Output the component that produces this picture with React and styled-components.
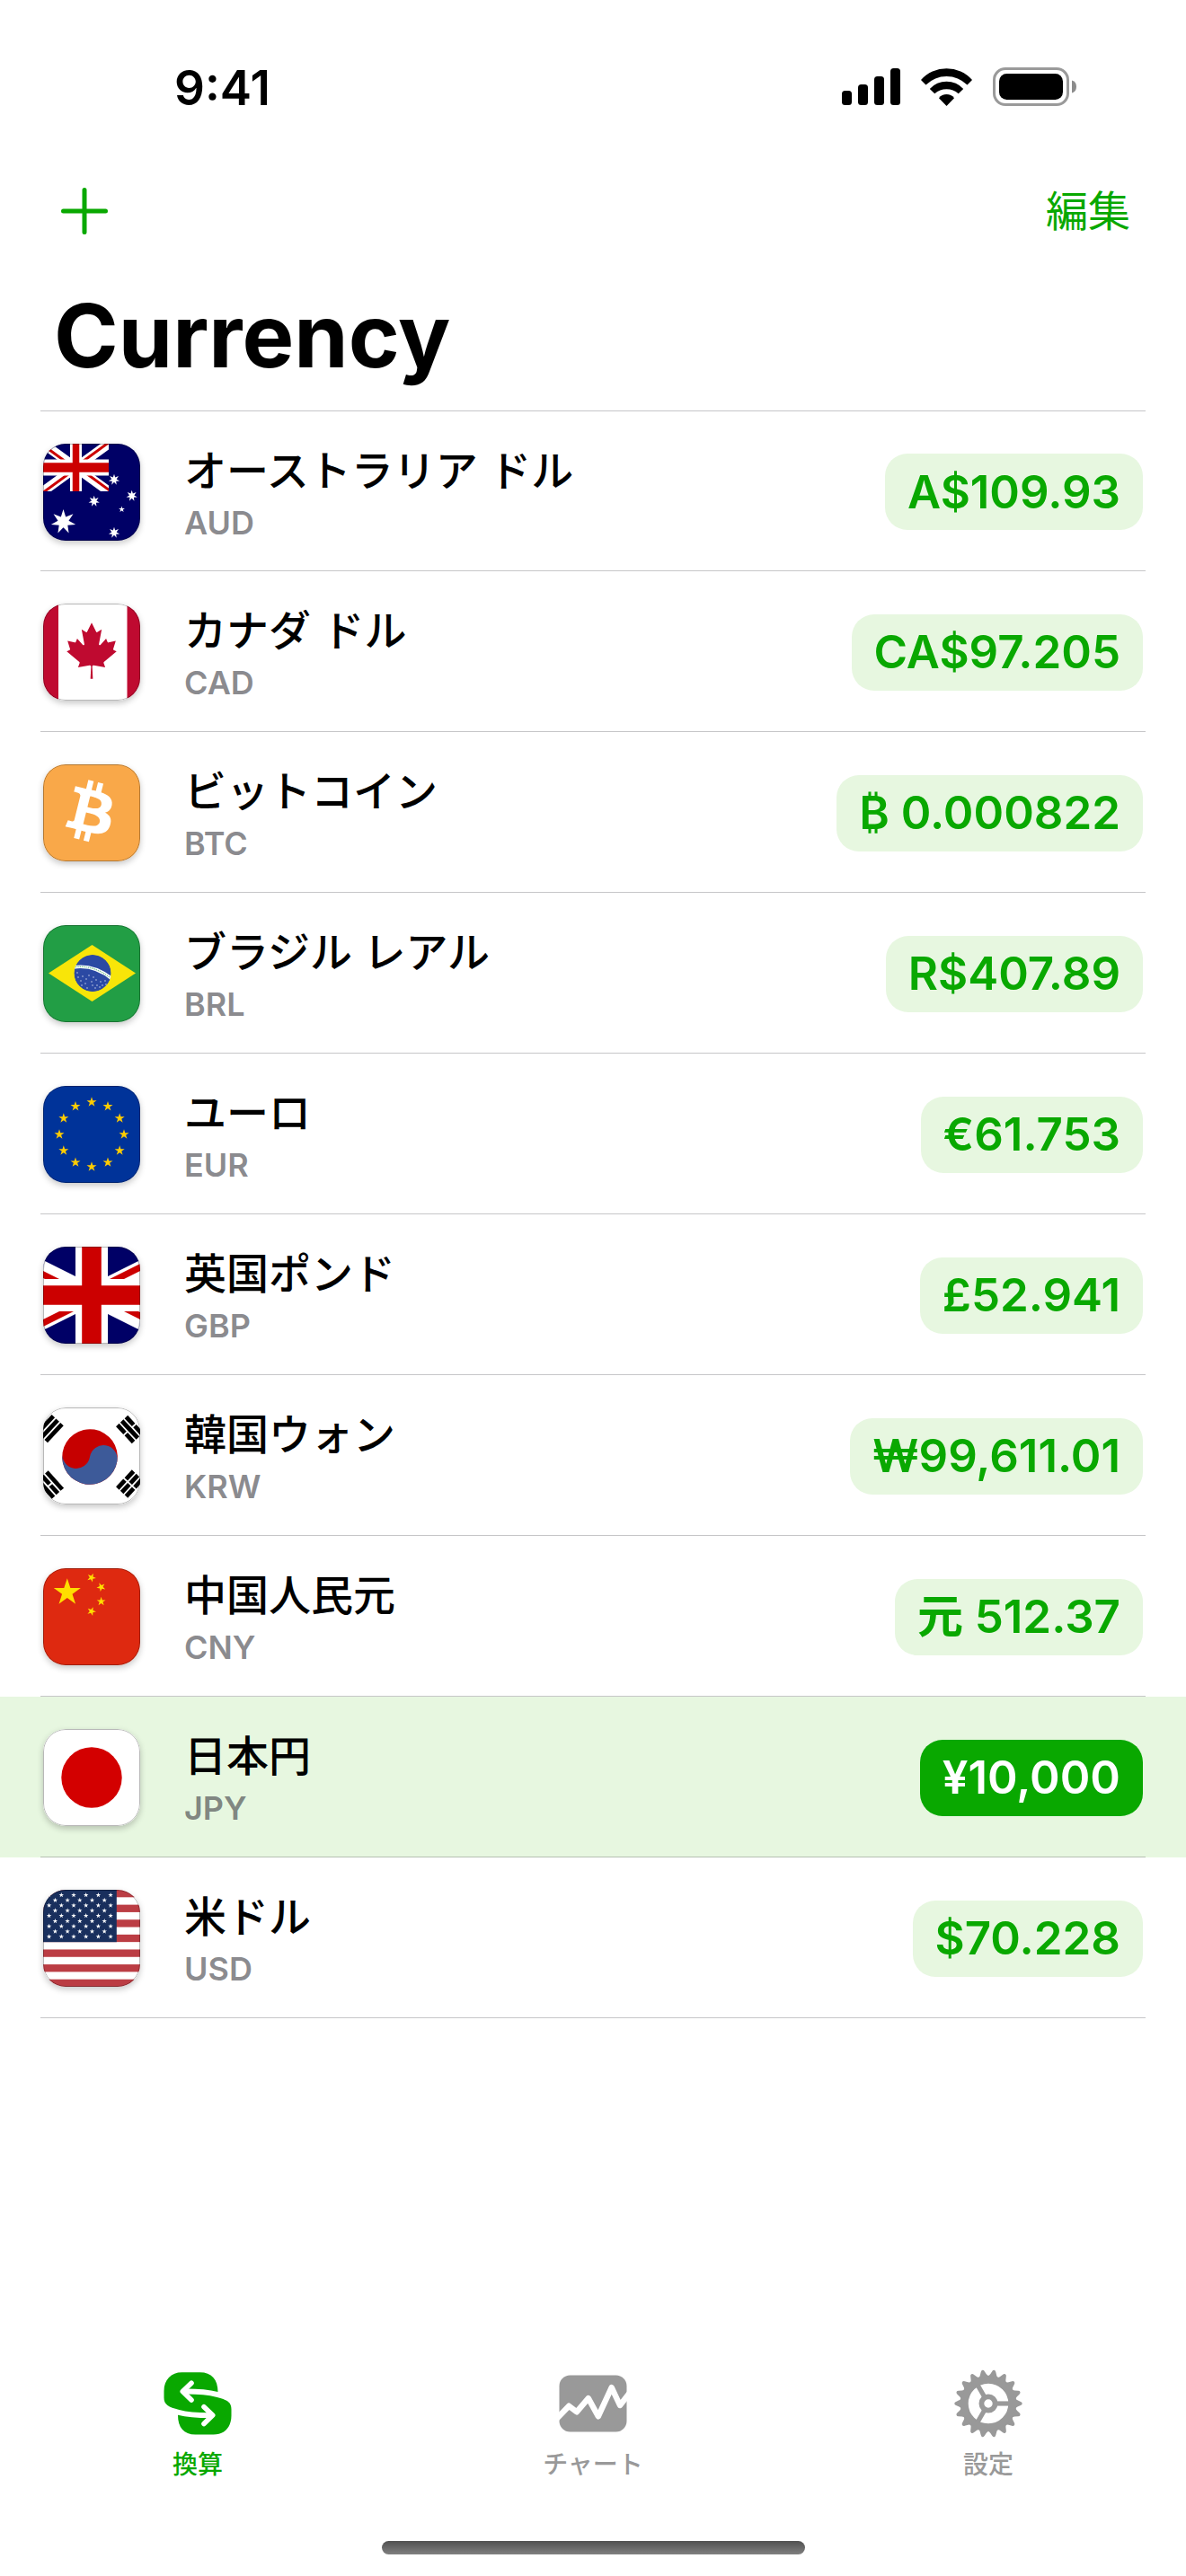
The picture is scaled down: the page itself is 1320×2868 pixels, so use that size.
import React, { useState } from "react";
import styled, { createGlobalStyle, css } from "styled-components";

const GREEN = "#09a800";
const MINT = "#e7f7e0";
const GRAY = "#999999";
const LINE = "rgba(60, 60, 67, 0.29)";

const GlobalStyle = createGlobalStyle`
  *, *::before, *::after { box-sizing: border-box; }
  body {
    margin: 0;
    background: #ffffff;
    color: #000000;
    font-family: Inter, "Noto Sans CJK JP", sans-serif;
  }
  button { font: inherit; color: inherit; background: none; border: 0; padding: 0; margin: 0; cursor: pointer; }
`;

const Page = styled.div`
  min-height: 100vh;
  display: flex;
  flex-direction: column;
`;

const StatusBar = styled.div`
  display: flex;
  align-items: center;
  justify-content: space-between;
  height: 160px;
  padding: 36px 122px 0 194px;
`;

const Clock = styled.time`
  font-size: 53px;
  line-height: 60px;
  font-weight: 600;
`;

const StatusIcons = styled.div`
  display: flex;
  align-items: center;
  gap: 23px;
  padding-bottom: 3px;
  svg { display: block; }
`;

const Toolbar = styled.div`
  display: flex;
  align-items: center;
  justify-content: space-between;
  height: 150px;
  padding: 0 62px 0 68px;
  color: ${GREEN};
`;

const IconButton = styled.button`
  display: flex;
  svg { display: block; }
`;

const TextButton = styled.button`
  && {
    font-size: 47px;
    line-height: 60px;
  }
`;

const Title = styled.h1`
  margin: 0;
  padding: 2px 60px 21px;
  font-size: 97px;
  line-height: 124px;
  font-weight: 700;
`;

const List = styled.ul`
  list-style: none;
  margin: 0;
  padding: 0;
`;

const Row = styled.li`
  height: 179px;
  padding: 0 45px;
  background: ${(p) => (p.$active ? MINT : "transparent")};
`;

const RowBody = styled.div`
  display: flex;
  align-items: center;
  height: 100%;
  padding: 2px 3px 0;
  border-bottom: 1px solid ${LINE};
  ${Row}:first-child & {
    border-top: 1px solid ${LINE};
  }
`;

const FlagTile = styled.div`
  flex: none;
  width: 108px;
  height: 108px;
  border-radius: 25px;
  overflow: hidden;
  box-shadow: 0 3px 7px rgba(0, 0, 0, 0.22);
  svg { display: block; width: 100%; height: 100%; }
`;

const Names = styled.div`
  flex: 1;
  display: flex;
  flex-direction: column;
  padding-left: 49px;
`;

const Name = styled.span`
  font-size: 47px;
  line-height: 68px;
  font-weight: 500;
`;

const Code = styled.span`
  font-size: 36px;
  line-height: 48px;
  font-weight: 600;
  color: rgba(60, 60, 67, 0.6);
`;

const Amount = styled.button`
  && {
    height: 85px;
    padding: 0 25px;
    border-radius: 25px;
    font-size: 51px;
    line-height: 60px;
    font-weight: 600;
    white-space: nowrap;
    color: ${GREEN};
    background: ${MINT};
    ${(p) =>
      p.$active &&
      css`
        color: #ffffff;
        background: ${GREEN};
      `}
  }
`;

const TabBar = styled.nav`
  display: grid;
  grid-template-columns: repeat(3, 1fr);
  margin-top: auto;
  padding-bottom: 63px;
`;

const Tab = styled.button`
  && {
    display: flex;
    flex-direction: column;
    align-items: center;
    gap: 8px;
    color: ${(p) => (p.$active ? GREEN : GRAY)};
    font-size: 28px;
    line-height: 44px;
    font-weight: 500;
  }
  svg { display: block; }
`;

const HomeIndicator = styled.div`
  align-self: center;
  width: 471px;
  height: 15px;
  margin-bottom: 24px;
  border-radius: 8px;
  background: linear-gradient(#505050, #808080);
`;

/* ---------- geometry helpers ---------- */

function starPoints(cx, cy, outer, inner, n, turn = 0) {
  const pts = [];
  for (let i = 0; i < n * 2; i++) {
    const r = i % 2 ? inner : outer;
    const a = -Math.PI / 2 + (i * Math.PI) / n + (turn * Math.PI) / 180;
    pts.push(`${(cx + r * Math.cos(a)).toFixed(2)},${(cy + r * Math.sin(a)).toFixed(2)}`);
  }
  return pts.join(" ");
}

const Star = ({ x, y, r, inner = 0.382, n = 5, turn = 0, fill }) => (
  <polygon points={starPoints(x, y, r, r * inner, n, turn)} fill={fill} />
);

/* ---------- flags ---------- */

const Australia = () => (
  <>
    <rect width="108" height="108" fill="#000066" />
    <clipPath id="auCanton"><rect width="73" height="53" /></clipPath>
    <g clipPath="url(#auCanton)">
      <path d="M0 0L73 53M73 0L0 53" stroke="#fff" strokeWidth="10.5" />
      <path d="M-1 1L36 28M37 25L74 -2M-1 55L36 28M37 25L74 52" stroke="#cc0000" strokeWidth="3" />
      <path d="M36.500 0V53" stroke="#fff" strokeWidth="13" />
      <path d="M0 26.500H73" stroke="#fff" strokeWidth="18" />
      <path d="M36.500 0V53" stroke="#cc0000" strokeWidth="7.500" />
      <path d="M0 26.500H73" stroke="#cc0000" strokeWidth="10.500" />
    </g>
    <Star x={22.5} y={87} r={14} inner={0.44} n={7} fill="#fff" />
    {[[79, 40], [98.7, 58], [56.7, 64], [79, 99]].map(([x, y]) => (
      <Star key={`${x}-${y}`} x={x} y={y} r={6.3} inner={0.44} n={7} fill="#fff" />
    ))}
    <Star x={87.5} y={73} r={3.6} fill="#fff" />
  </>
);

const Canada = () => (
  <>
    <rect width="108" height="108" fill="#fff" />
    <path d="M0 0H17V108H0ZM93.500 0H108V108H93.500Z" fill="#bf0a30" />
    <path
      transform="translate(54 52.200) scale(.0149 .0155)"
      fill="#bf0a30"
      d="m-90 2030 45-863a95 95 0 0 0-111-98l-859 151 116-320a65 65 0 0 0-20-73l-941-762 212-99a65 65 0 0 0 34-79l-186-572 542 115a65 65 0 0 0 73-38l105-247 423 454a65 65 0 0 0 111-57l-204-1052 327 189a65 65 0 0 0 91-27l332-652 332 652a65 65 0 0 0 91 27l327-189-204 1052a65 65 0 0 0 111 57l423-454 105 247a65 65 0 0 0 73 38l542-115-186 572a65 65 0 0 0 34 79l212 99-941 762a65 65 0 0 0-20 73l116 320-859-151a95 95 0 0 0-111 98l45 863z"
    />
  </>
);

const Bitcoin = () => (
  <>
    <rect width="108" height="108" fill="#f9a849" />
    <path
      transform="translate(-1.800 -1.600) scale(1.700)"
      fill="#fff"
      d="m46.103 27.444c0.637-4.258-2.605-6.547-7.038-8.074l1.438-5.768-3.511-0.875-1.4 5.616c-0.923-0.23-1.871-0.447-2.813-0.662l1.41-5.653-3.509-0.875-1.439 5.766c-0.764-0.174-1.514-0.346-2.242-0.527l0.004-0.018-4.842-1.209-0.934 3.75s2.605 0.597 2.55 0.634c1.422 0.355 1.679 1.296 1.636 2.042l-1.638 6.571c0.098 0.025 0.225 0.061 0.365 0.117-0.117-0.029-0.242-0.061-0.371-0.092l-2.296 9.205c-0.174 0.432-0.615 1.08-1.609 0.834 0.035 0.051-2.552-0.637-2.552-0.637l-1.743 4.019 4.569 1.139c0.85 0.213 1.683 0.436 2.503 0.646l-1.453 5.834 3.507 0.875 1.439-5.772c0.958 0.26 1.888 0.5 2.798 0.726l-1.434 5.745 3.511 0.875 1.453-5.823c5.987 1.133 10.489 0.676 12.384-4.739 1.527-4.36-0.076-6.875-3.226-8.515 2.294-0.529 4.022-2.038 4.483-5.155zm-8.022 11.249c-1.085 4.36-8.426 2.003-10.806 1.412l1.928-7.729c2.38 0.594 10.012 1.77 8.878 6.317zm1.086-11.312c-0.99 3.966-7.1 1.951-9.082 1.457l1.748-7.01c1.982 0.494 8.365 1.416 7.334 5.553z"
    />
  </>
);

const BRAZIL_STARS = [
  [39, 58], [42, 62], [44, 57], [48, 60], [47, 65], [43, 67], [51, 56], [54, 63], [56, 58],
  [59, 61], [55, 67], [60, 67], [64, 63], [66, 67], [69, 62], [70, 66], [49, 70], [58, 70], [63, 69], [38, 53], [49, 47],
];

const Brazil = () => (
  <>
    <rect width="108" height="108" fill="#229e45" />
    <path d="M6 53.500L54.500 22L103 53.500L54.500 85Z" fill="#f8e509" />
    <clipPath id="brGlobe"><circle cx="55" cy="53.500" r="20.600" /></clipPath>
    <g clipPath="url(#brGlobe)">
      <circle cx="55" cy="53.500" r="20.600" fill="#2b49a3" />
      <path d="M33 47C48 44.500 64 49 78 61" fill="none" stroke="#fff" strokeWidth="3.600" />
      <path d="M36 46.600C49 45 62 49 74 58" fill="none" stroke="#7fc49a" strokeWidth="1.300" strokeDasharray="1.500 .8" />
      {BRAZIL_STARS.map(([x, y]) => (
        <circle key={`${x}-${y}`} cx={x} cy={y} r="0.65" fill="#e8edfa" />
      ))}
    </g>
  </>
);

const Europe = () => (
  <>
    <rect width="108" height="108" fill="#003399" />
    {Array.from({ length: 12 }, (_, i) => {
      const a = (i * Math.PI) / 6;
      return <Star key={i} x={54 + 36 * Math.sin(a)} y={54 - 36 * Math.cos(a)} r={5.8} fill="#ffcc00" />;
    })}
  </>
);

const Britain = () => (
  <>
    <rect width="108" height="108" fill="#000066" />
    <path d="M-54 0L162 108M162 0L-54 108" stroke="#fff" strokeWidth="21.600" />
    <path d="M36 0H72V108H36ZM0 36H108V72H0Z" fill="#fff" />
    <path
      d="M43.200 0H64.800V108H43.200ZM0 43.200H108V64.800H0ZM0 27L18 36H2L0 35ZM108 19V27L90 36H74ZM108 81L90 72H106L108 73ZM0 89V81L18 72H34Z"
      fill="#cc0000"
      fillRule="nonzero"
    />
  </>
);

const Trigram = ({ x, y, turn, bars }) => (
  <g transform={`translate(${x} ${y}) rotate(${turn})`} fill="#000">
    {bars.map((solid, i) => {
      const top = (i - 1) * 6.6 - 2.4;
      return solid ? (
        <rect key={i} x="-13" y={top} width="26" height="4.8" />
      ) : (
        <g key={i}>
          <rect x="-13" y={top} width="12" height="4.8" />
          <rect x="1" y={top} width="12" height="4.8" />
        </g>
      );
    })}
  </g>
);

const Korea = () => (
  <>
    <rect width="108" height="108" fill="#fff" />
    <g transform="translate(52 55) rotate(9.500)">
      <circle r="30.800" fill="#c60000" />
      <path
        d="M-30.800 0A30.800 30.800 0 0 0 30.800 0A15.400 15.400 0 0 0 0 0A15.400 15.400 0 0 1-30.800 0Z"
        fill="#3d5a99"
      />
    </g>
    <Trigram x={7.3} y={23.6} turn={-47} bars={[true, true, true]} />
    <Trigram x={96.5} y={24.5} turn={47} bars={[false, true, false]} />
    <Trigram x={7.7} y={86} turn={48} bars={[true, false, true]} />
    <Trigram x={96.5} y={85} turn={-47} bars={[false, false, false]} />
  </>
);

const China = () => (
  <>
    <rect width="108" height="108" fill="#de2910" />
    <Star x={26.8} y={27} r={15.8} fill="#ffde00" />
    <Star x={53.8} y={10.5} r={5.2} turn={23} fill="#ffde00" />
    <Star x={64.6} y={21} r={5.2} turn={46} fill="#ffde00" />
    <Star x={64.6} y={37} r={5.2} turn={0} fill="#ffde00" />
    <Star x={53.8} y={48} r={5.2} turn={21} fill="#ffde00" />
  </>
);

const Japan = () => (
  <>
    <rect width="108" height="108" fill="#fff" />
    <circle cx="54" cy="54" r="33.700" fill="#d30000" />
  </>
);

const America = () => (
  <>
    <rect width="108" height="108" fill="#fff" />
    {[0, 2, 4, 6, 8, 10, 12].map((i) => (
      <rect key={i} y={(i * 108) / 13} width="108" height={108 / 13} fill="#bb3d44" />
    ))}
    <rect width="81.800" height="58.200" fill="#192f5d" />
    {Array.from({ length: 9 }, (_, row) =>
      Array.from({ length: row % 2 ? 5 : 6 }, (_, col) => (
        <Star
          key={`${row}-${col}`}
          x={(row % 2 ? 13.4 : 6.6) + col * 13.7}
          y={5.8 + row * 5.8}
          r={2.9}
          fill="#fff"
        />
      ))
    )}
  </>
);

const Flag = ({ art: Art, label }) => (
  <FlagTile>
    <svg viewBox="0 0 108 108" role="img" aria-label={label}>
      <Art />
      <rect x=".5" y=".5" width="107" height="107" rx="24.500" fill="none" stroke="#000" strokeOpacity=".28" />
    </svg>
  </FlagTile>
);

/* ---------- icons ---------- */

const SignalIcon = () => (
  <svg width="65" height="42" viewBox="0 0 65 42" aria-hidden="true">
    <rect x="0" y="25" width="11" height="16" rx="3.500" />
    <rect x="18" y="18" width="11" height="23" rx="3.500" />
    <rect x="36" y="9" width="11" height="32" rx="3.500" />
    <rect x="54" y="0" width="11" height="41" rx="3.500" />
  </svg>
);

const WifiIcon = () => (
  <svg width="57" height="42" viewBox="0 0 57 42" aria-hidden="true">
    <path d="M0 13A38 38 0 0 1 57 13L51.500 18.500A32.600 32.600 0 0 0 5.500 18.500Z" />
    <path d="M9.800 23A25.200 25.200 0 0 1 47.200 23L41.700 28.300A19.900 19.900 0 0 0 15.300 28.300Z" />
    <path d="M20 33.300A10.500 10.500 0 0 1 37 33.300L28.500 42Z" />
  </svg>
);

const BatteryIcon = () => (
  <svg width="93" height="43" viewBox="0 0 93 43" aria-hidden="true">
    <rect x="1.500" y="1.500" width="82" height="40" rx="12.500" fill="none" stroke="#9a9a9a" strokeWidth="3" />
    <rect x="7" y="7" width="71" height="29" rx="8.500" />
    <path d="M88 14.500C91.500 15.500 93 18 93 21.500S91.500 27.500 88 28.500Z" fill="#8c8c8c" />
  </svg>
);

const PlusIcon = () => (
  <svg width="52" height="52" viewBox="0 0 52 52" aria-hidden="true">
    <path d="M26 2.500V49.500M2.500 26H49.500" stroke="currentColor" strokeWidth="5" strokeLinecap="round" />
  </svg>
);

const ConvertIcon = () => (
  <svg width="76" height="76" viewBox="-.5 -3.200 76 76" aria-hidden="true">
    <path
      fill="currentColor"
      d="M0 21C0 8 8 0 20 0H40C53 0 60 8 60 21.800Q46 18.400 24 18.400V24.300Q46 24.300 58 27.500C70 30.500 75 33 75 41V48.300C75 61.300 67 69.300 55 69.300H35C22 69.300 15.500 61.300 15.500 47.500Q29 50.900 51 50.900V45Q29 45 17 41.800C5 38.800 0 36 0 28.300Z"
    />
    <path
      d="M30.500 12L20.800 21.400L30.500 30.800M44.500 38.500L54.200 47.900L44.500 57.300"
      fill="none"
      stroke="#fff"
      strokeWidth="5.600"
      strokeLinecap="round"
      strokeLinejoin="round"
    />
  </svg>
);

const ChartIcon = () => (
  <svg width="76" height="76" viewBox="-.5 -6.500 76 76" aria-hidden="true">
    <rect width="75" height="63" rx="12" fill="currentColor" />
    <path
      d="M-3 48.500L10.700 34.200L19.300 40.800L32.300 25.600L43.300 45.800L58.200 13.600L67.500 33.500L78 20"
      fill="none"
      stroke="#fff"
      strokeWidth="6.400"
      strokeLinejoin="round"
    />
  </svg>
);

const GearIcon = () => (
  <svg width="76" height="76" viewBox="-38 -38 76 76" aria-hidden="true">
    <circle r="26.800" fill="none" stroke="currentColor" strokeWidth="9" />
    <circle r="7.600" fill="none" stroke="currentColor" strokeWidth="5.800" />
    {[0, 120, 240].map((a) => (
      <path key={a} d="M9 0H24" transform={`rotate(${a})`} stroke="currentColor" strokeWidth="5.200" />
    ))}
    {Array.from({ length: 18 }, (_, i) => (
      <path
        key={i}
        transform={`rotate(${i * 20})`}
        fill="currentColor"
        d="M30 -5.200Q32 -3.600 36 -2.100Q37.700 -1.500 37.700 0Q37.700 1.500 36 2.100Q32 3.600 30 5.200Z"
      />
    ))}
  </svg>
);

/* ---------- data ---------- */

const CURRENCIES = [
  { code: "AUD", name: "オーストラリア ドル", amount: "A$109.93", art: Australia },
  { code: "CAD", name: "カナダ ドル", amount: "CA$97.205", art: Canada },
  { code: "BTC", name: "ビットコイン", amount: "₿ 0.000822", art: Bitcoin },
  { code: "BRL", name: "ブラジル レアル", amount: "R$407.89", art: Brazil },
  { code: "EUR", name: "ユーロ", amount: "€61.753", art: Europe },
  { code: "GBP", name: "英国ポンド", amount: "£52.941", art: Britain },
  { code: "KRW", name: "韓国ウォン", amount: "₩99,611.01", art: Korea },
  { code: "CNY", name: "中国人民元", amount: "元 512.37", art: China },
  { code: "JPY", name: "日本円", amount: "¥10,000", art: Japan },
  { code: "USD", name: "米ドル", amount: "$70.228", art: America },
];

const TABS = [
  { id: "convert", label: "換算", icon: ConvertIcon },
  { id: "chart", label: "チャート", icon: ChartIcon },
  { id: "settings", label: "設定", icon: GearIcon },
];

export default function App() {
  const [base, setBase] = useState("JPY");
  const [tab, setTab] = useState("convert");

  return (
    <Page lang="ja">
      <GlobalStyle />
      <StatusBar>
        <Clock>9:41</Clock>
        <StatusIcons>
          <SignalIcon />
          <WifiIcon />
          <BatteryIcon />
        </StatusIcons>
      </StatusBar>
      <Toolbar>
        <IconButton type="button" aria-label="追加"><PlusIcon /></IconButton>
        <TextButton type="button">編集</TextButton>
      </Toolbar>
      <Title>Currency</Title>
      <List>
        {CURRENCIES.map((c) => (
          <Row key={c.code} $active={c.code === base}>
            <RowBody>
              <Flag art={c.art} label={c.code} />
              <Names>
                <Name>{c.name}</Name>
                <Code>{c.code}</Code>
              </Names>
              <Amount type="button" $active={c.code === base} onClick={() => setBase(c.code)}>
                {c.amount}
              </Amount>
            </RowBody>
          </Row>
        ))}
      </List>
      <TabBar>
        {TABS.map(({ id, label, icon: Icon }) => (
          <Tab key={id} type="button" $active={id === tab} onClick={() => setTab(id)}>
            <Icon />
            {label}
          </Tab>
        ))}
      </TabBar>
      <HomeIndicator />
    </Page>
  );
}
